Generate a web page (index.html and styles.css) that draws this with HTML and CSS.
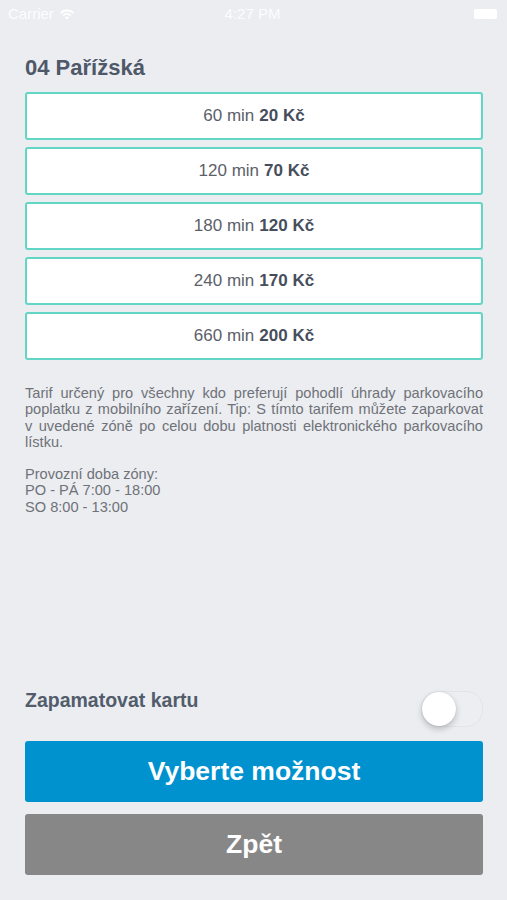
FILE: index.html
```html
<!DOCTYPE html>
<html lang="cs">
  <head>
    <meta charset="UTF-8" />
    <meta name="viewport" content="width=device-width, initial-scale=1.0" />
    <title>04 Pařížská</title>
    <link rel="stylesheet" href="styles.css">
  </head>
  <body>
    <div class="page">
      <div class="statusbar">
        <div class="carrier">
          Carrier
          <svg width="16" height="12" viewBox="0 0 16 12">
            <path d="M1 4.2a10 10 0 0 1 14 0l-1.4 1.5a8 8 0 0 0-11.2 0z" fill="#fff" />
            <path d="M3.5 6.8a6.5 6.5 0 0 1 9 0l-1.4 1.5a4.5 4.5 0 0 0-6.2 0z" fill="#fff" />
            <path d="M6 9.4a3 3 0 0 1 4 0L8 11.5z" fill="#fff" />
          </svg>
        </div>
        <div class="clock">4:27 PM</div>
        <div class="battery"><span></span></div>
      </div>

      <div class="content">
        <h1 class="zone">04 Pařížská</h1>

        <div class="tariffs">
          <div class="tariff">60 min <b>20 Kč</b></div>
          <div class="tariff">120 min <b>70 Kč</b></div>
          <div class="tariff">180 min <b>120 Kč</b></div>
          <div class="tariff">240 min <b>170 Kč</b></div>
          <div class="tariff">660 min <b>200 Kč</b></div>
        </div>

        <p class="info">Tarif určený pro všechny kdo preferují pohodlí úhrady parkovacího poplatku z mobilního zařízení. Tip: S tímto tarifem můžete zaparkovat v uvedené zóně po celou dobu platnosti elektronického parkovacího lístku.</p>
        <p class="hours">Provozní doba zóny:<br />PO - PÁ 7:00 - 18:00<br />SO 8:00 - 13:00</p>

        <div class="spacer"></div>

        <div class="remember">
          <span>Zapamatovat kartu</span>
          <div class="switch"><div class="knob"></div></div>
        </div>

        <button class="btn btn-primary">Vyberte možnost</button>
        <button class="btn btn-back">Zpět</button>
      </div>
    </div>
  </body>
</html>
```

FILE: styles.css
```css
body {
  margin: 0;
  background: #ebedf1;
  font-family: "Liberation Sans", Arial, sans-serif;
}

.page {
  height: 900px;
  display: flex;
  flex-direction: column;
}

.statusbar {
  height: 27px;
  display: flex;
  align-items: center;
  justify-content: space-between;
  padding: 0 10px 0 8px;
  color: rgba(255, 255, 255, 0.9);
  font-size: 15px;
}
.carrier {
  display: flex;
  align-items: center;
  gap: 5px;
  width: 90px;
}
.battery {
  width: 90px;
  display: flex;
  justify-content: flex-end;
}
.battery span {
  width: 23px;
  height: 10px;
  background: #fff;
  border-radius: 2px;
}

.content {
  flex: 1;
  display: flex;
  flex-direction: column;
  padding: 0 24px 25px 25px;
}

.zone {
  font-size: 22px;
  color: #4e5868;
  margin: 28px 0 11px;
  line-height: 26px;
}

.tariffs {
  display: flex;
  flex-direction: column;
  gap: 7px;
}
.tariff {
  height: 44px;
  background: #fff;
  border: 2px solid #62d6c5;
  border-radius: 3px;
  display: flex;
  align-items: center;
  justify-content: center;
  font-size: 17px;
  color: #5b6069;
}
.tariff b {
  color: #474e5b;
  margin-left: 5px;
}

.info,
.hours {
  font-size: 14.6px;
  line-height: 16.3px;
  color: #6f7278;
  margin: 0;
}
.info {
  text-align: justify;
  margin-top: 25px;
}
.hours {
  margin-top: 16px;
}

.spacer {
  flex: 1;
}

.remember {
  display: flex;
  align-items: center;
  justify-content: space-between;
  margin-bottom: 14px;
}
.remember span {
  font-size: 19.5px;
  font-weight: bold;
  color: #525c6b;
  margin-top: -17px;
}

.switch {
  width: 60px;
  height: 34px;
  border-radius: 17px;
  border: 1px solid #e2e4e8;
  background: #eceef2;
  position: relative;
}
.knob {
  position: absolute;
  left: 0;
  top: 0;
  width: 34px;
  height: 34px;
  border-radius: 50%;
  background: #fff;
  box-shadow: 0 3px 6px rgba(0, 0, 0, 0.22), 0 0 1px rgba(0, 0, 0, 0.15);
}

.btn {
  display: block;
  width: 100%;
  height: 61px;
  border: none;
  border-radius: 3px;
  color: #fff;
  font-family: "Liberation Sans", Arial, sans-serif;
  font-size: 26.5px;
  font-weight: bold;
}
.btn-primary {
  background: #0091cf;
  margin-bottom: 12px;
}
.btn-back {
  background: #878787;
}
```
